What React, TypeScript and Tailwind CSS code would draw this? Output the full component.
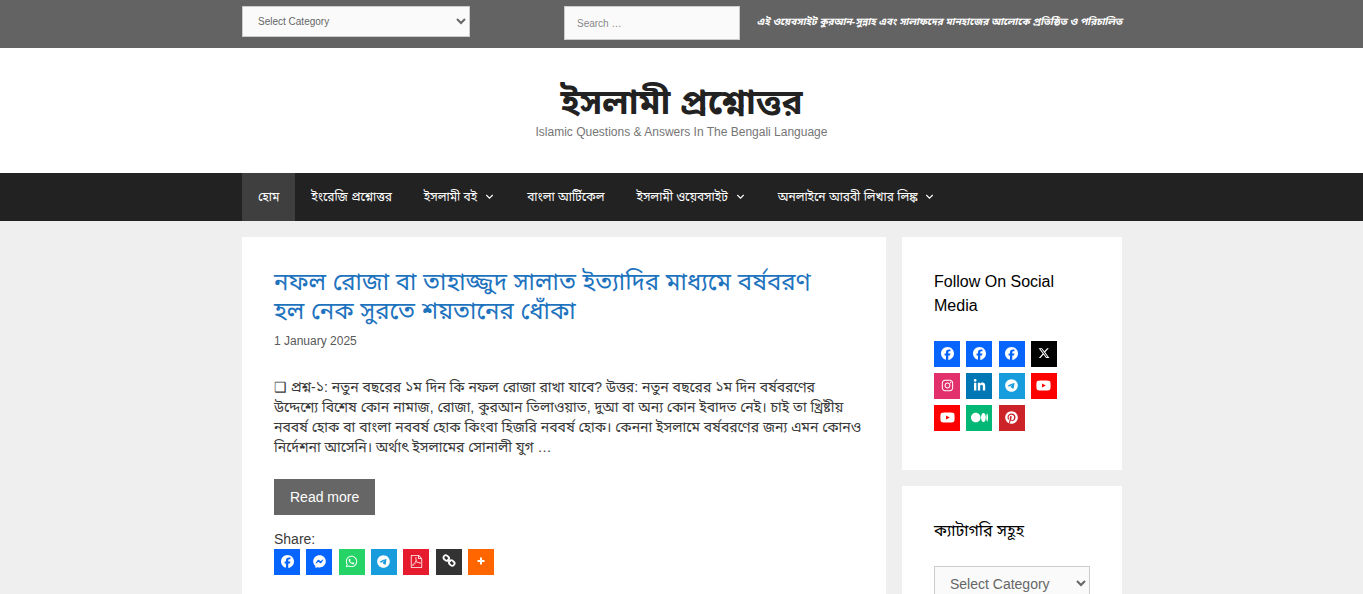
import type { ReactNode } from "react";
import {
  FaFacebook,
  FaFacebookMessenger,
  FaInstagram,
  FaLinkedinIn,
  FaMedium,
  FaPinterest,
  FaTelegram,
  FaWhatsapp,
  FaXTwitter,
  FaYoutube,
} from "react-icons/fa6";
import { ImFilePdf } from "react-icons/im";

function Chevron() {
  return (
    <svg viewBox="0 0 10 14" className="h-[14px] w-[10px]" fill="none" stroke="currentColor" strokeWidth="1.1" aria-hidden="true">
      <path d="M1.3 5 4.5 8.2 7.7 5" />
    </svg>
  );
}

function ChainLink() {
  return (
    <svg viewBox="0 0 16 16" className="size-4" fill="none" stroke="currentColor" strokeWidth="1.8" aria-hidden="true">
      <g transform="translate(0 -0.5) rotate(42 8 8)">
        <rect x="1.4" y="5.7" width="5.8" height="4.6" rx="2.2" />
        <rect x="8.8" y="5.7" width="5.8" height="4.6" rx="2.2" />
        <path d="M6 8h4" />
      </g>
    </svg>
  );
}

function Plus() {
  return (
    <svg viewBox="0 0 14 14" className="size-[14px]" fill="none" stroke="currentColor" strokeWidth="2" aria-hidden="true">
      <path d="M7 3.5v7M3.5 7h7" />
    </svg>
  );
}

function SocialLink({ label, color, children }: { label: string; color: string; children: ReactNode }) {
  return (
    <a href="#" aria-label={label} className={"flex size-[26px] items-center justify-center pb-0.5 text-white " + color}>
      {children}
    </a>
  );
}

function CategorySelect({ id, className }: { id: string; className: string }) {
  return (
    <select
      id={id}
      aria-label="Select Category"
      className={"border border-[#cccccc] bg-[#fafafa] text-[#666666] " + className}
    >
      <option>Select Category</option>
    </select>
  );
}

const menu = [
  { label: "হোম", active: true },
  { label: "ইংরেজি প্রশ্নোত্তর" },
  { label: "ইসলামী বই", sub: true },
  { label: "বাংলা আর্টিকেল" },
  { label: "ইসলামী ওয়েবসাইট", sub: true },
  { label: "অনলাইনে আরবী লিখার লিঙ্ক", sub: true },
];

export default function App() {
  return (
    <div className="min-h-screen bg-[#efefef] font-['Liberation_Sans','Noto_Sans_Bengali',Arial,sans-serif] text-sm text-[#3a3a3a]">
      <div className="h-12 bg-[#636363]">
        <div className="mx-auto flex max-w-[881px] items-start pt-1.5 pl-px">
          <CategorySelect id="top-category" className="h-[31px] w-[228px] px-[11px] text-[10px]" />
          <form className="ml-auto" role="search">
            <input
              type="search"
              aria-label="Search"
              placeholder="Search …"
              className="block h-[34px] w-44 border border-[#cccccc] bg-[#fafafa] px-3 text-[10px] text-[#666666] placeholder:text-[#888888]"
            />
          </form>
          <p className="w-[382px] pt-2 text-right text-[10px] leading-4 font-bold whitespace-nowrap text-white italic">
            এই ওয়েবসাইট কুরআন-সুন্নাহ এবং সালাফদের মানহাজের আলোকে প্রতিষ্ঠিত ও পরিচালিত
          </p>
        </div>
      </div>

      <header className="bg-white pt-8 pb-8 text-center">
        <h1 className="text-[35px] leading-[43px] font-bold text-[#222222]">
          <a href="#">ইসলামী প্রশ্নোত্তর</a>
        </h1>
        <p className="text-xs leading-[18px] text-[#757575]">Islamic Questions &amp; Answers In The Bengali Language</p>
      </header>

      <nav className="bg-[#222222]">
        <ul className="mx-auto flex max-w-[881px] pl-px text-xs leading-[48px] text-white">
          {menu.map((item) => (
            <li key={item.label}>
              <a
                href="#"
                className={"flex h-12 items-center px-4 whitespace-nowrap " + (item.active ? "bg-[#3f3f3f]" : "")}
              >
                {item.label}
                {item.sub && (
                  <span className="ml-2">
                    <Chevron />
                  </span>
                )}
              </a>
            </li>
          ))}
        </ul>
      </nav>

      <div className="mx-auto mt-4 flex max-w-[881px] items-start gap-4 pl-px">
        <main className="min-w-0 flex-1">
          <article className="bg-white px-8 pt-[30px] pb-8">
            <h2 className="pr-4 text-2xl leading-[29px] text-[#1e73be]">
              <a href="#">নফল রোজা বা তাহাজ্জুদ সালাত ইত্যাদির মাধ্যমে বর্ষবরণ হল নেক সুরতে শয়তানের ধোঁকা</a>
            </h2>
            <p className="mt-[7px] text-xs leading-[18px] text-[#595959]">
              <time dateTime="2025-01-01">1 January 2025</time>
            </p>
            <p className="mt-[27px] -mr-2 text-sm leading-5">
              ❑ প্রশ্ন-১: নতুন বছরের ১ম দিন কি নফল রোজা রাখা যাবে? উত্তর: নতুন বছরের ১ম দিন বর্ষবরণের উদ্দেশ্যে বিশেষ কোন
              নামাজ, রোজা, কুরআন তিলাওয়াত, দুআ বা অন্য কোন ইবাদত নেই। চাই তা খ্রিষ্টীয় নববর্ষ হোক বা বাংলা নববর্ষ হোক
              কিংবা হিজরি নববর্ষ হোক। কেননা ইসলামে বর্ষবরণের জন্য এমন কোনও নির্দেশনা আসেনি। অর্থাৎ ইসলামের সোনালী যুগ …
            </p>
            <a href="#" className="mt-[22px] inline-block bg-[#666666] px-4 py-2 leading-5 text-white">
              Read more
            </a>
            <div className="mt-3.5">
              <p className="leading-5">Share:</p>
              <div className="flex w-[220px] justify-between">
                <SocialLink label="Facebook" color="bg-[#0765fe]"><FaFacebook className="size-[13px]" /></SocialLink>
                <SocialLink label="Messenger" color="bg-[#0765fe]"><FaFacebookMessenger className="size-[13px]" /></SocialLink>
                <SocialLink label="WhatsApp" color="bg-[#25d366]"><FaWhatsapp className="size-[13px]" /></SocialLink>
                <SocialLink label="Telegram" color="bg-[#179cde]"><FaTelegram className="size-[13px]" /></SocialLink>
                <SocialLink label="PDF" color="bg-[#e61b2e]"><ImFilePdf className="size-[13px]" /></SocialLink>
                <SocialLink label="Copy link" color="bg-[#333333]"><ChainLink /></SocialLink>
                <SocialLink label="More" color="bg-[#ff6600]"><Plus /></SocialLink>
              </div>
            </div>
          </article>
        </main>

        <aside className="flex w-[220px] flex-col gap-4">
          <section className="bg-white px-8 pt-[33px] pb-[39px]">
            <h2 className="mb-[23px] text-base leading-6 text-black">Follow On Social Media</h2>
            <div className="grid w-[123px] grid-cols-[repeat(4,26px)] justify-between gap-y-1.5">
              <SocialLink label="Facebook page" color="bg-[#0765fe]"><FaFacebook className="size-[13px]" /></SocialLink>
              <SocialLink label="Facebook group" color="bg-[#0765fe]"><FaFacebook className="size-[13px]" /></SocialLink>
              <SocialLink label="Facebook profile" color="bg-[#0765fe]"><FaFacebook className="size-[13px]" /></SocialLink>
              <SocialLink label="X" color="bg-black"><FaXTwitter className="size-3" /></SocialLink>
              <SocialLink label="Instagram" color="bg-[#e1306c]"><FaInstagram className="size-[13px]" /></SocialLink>
              <SocialLink label="LinkedIn" color="bg-[#0077b5]"><FaLinkedinIn className="size-[13px]" /></SocialLink>
              <SocialLink label="Telegram" color="bg-[#179cde]"><FaTelegram className="size-[13px]" /></SocialLink>
              <SocialLink label="YouTube channel" color="bg-[#ff0000]"><FaYoutube className="size-[15px]" /></SocialLink>
              <SocialLink label="YouTube videos" color="bg-[#ff0000]"><FaYoutube className="size-[15px]" /></SocialLink>
              <SocialLink label="Medium" color="bg-[#03b876]"><FaMedium className="size-[17px]" /></SocialLink>
              <SocialLink label="Pinterest" color="bg-[#cc2329]"><FaPinterest className="size-[13px]" /></SocialLink>
            </div>
          </section>
          <section className="bg-white px-8 pt-[33px] pb-8">
            <h2 className="mb-[23px] text-base leading-6 text-black">ক্যাটাগরি সহূহ</h2>
            <CategorySelect id="side-category" className="h-[35px] w-full px-[11px] text-sm" />
          </section>
        </aside>
      </div>
    </div>
  );
}
